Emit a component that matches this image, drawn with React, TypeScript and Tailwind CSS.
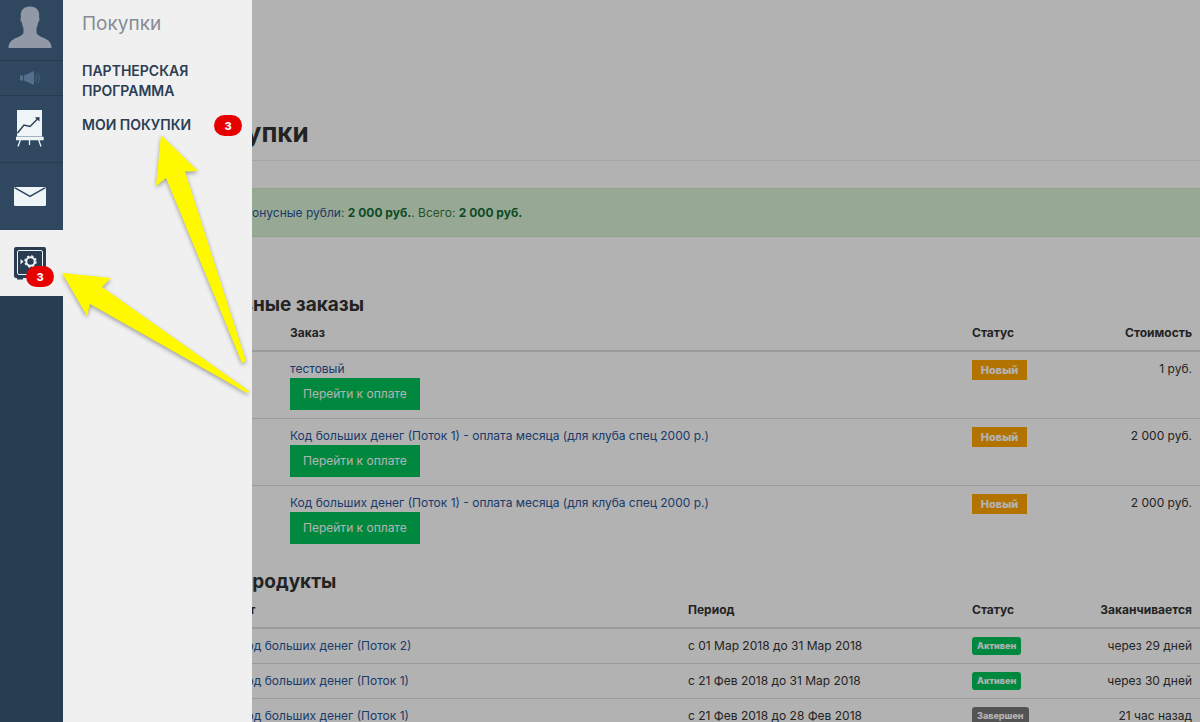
type Order = { title: string; price: string };
type Product = { title: string; period: string; active: boolean; ends: string };

const orders: Order[] = [
	{ title: "тестовый", price: "1 руб." },
	{
		title: "Код больших денег (Поток 1) - оплата месяца (для клуба спец 2000 р.)",
		price: "2 000 руб.",
	},
	{
		title: "Код больших денег (Поток 1) - оплата месяца (для клуба спец 2000 р.)",
		price: "2 000 руб.",
	},
];

const products: Product[] = [
	{
		title: "Код больших денег (Поток 2)",
		period: "с 01 Мар 2018 до 31 Мар 2018",
		active: true,
		ends: "через 29 дней",
	},
	{
		title: "Код больших денег (Поток 1)",
		period: "с 21 Фев 2018 до 31 Мар 2018",
		active: true,
		ends: "через 30 дней",
	},
	{
		title: "Код больших денег (Поток 1)",
		period: "с 21 Фев 2018 до 28 Фев 2018",
		active: false,
		ends: "21 час назад",
	},
];

function CountBadge() {
	return (
		<span className="flex h-[21px] w-7 items-center justify-center rounded-full bg-[#e60000] text-[11px] font-extrabold text-white">
			3
		</span>
	);
}

function UserIcon() {
	return (
		<svg width="44" height="44" viewBox="0 0 44 44" fill="#9099a5">
			<path d="M22 2.500c-6 0-9.200 3.500-9.200 8.500 0 1 .1 1.800.2 2.600-.9.200-.6 4.400 1 5 .3 2.800.8 4.300 1.500 5.700V29c-1 2.400-4 3.400-7.500 5C3.500 36 .5 38.500.5 44h43c0-5.500-3-8-7.500-10-3.500-1.600-6.500-2.600-7.500-5v-4.700c.7-1.400 1.200-2.900 1.500-5.700 1.600-.6 1.900-4.800 1-5 .1-.8.200-1.600.200-2.600 0-5-3.200-8.500-9.200-8.500z" />
		</svg>
	);
}

function MegaphoneIcon() {
	return (
		<svg width="22" height="16" viewBox="0 0 22 16" fill="#54708d">
			<path d="M1 5.500h3v5H1zM5 5.500 15 1v14L5 10.500z" />
			<path d="M16.500 4.500q2 3.500 0 7M18.500 2.500q3.500 5.500 0 11" fill="none" stroke="#486480" />
		</svg>
	);
}

function BoardIcon() {
	return (
		<svg width="28" height="40" viewBox="0 0 28 40">
			<path d="M1 1h25v26.500H1z" fill="#eff5f7" />
			<path d="M0 28.500h27v2H0zM4.500 30.500 2 37.500M13.500 30.500V36M22.500 30.500l2.500 7" fill="#eff5f7" stroke="#eff5f7" strokeWidth="1.300" />
			<path d="M1.500 24 8 16l6 1.500 8-8" fill="none" stroke="#2b4056" strokeWidth="1.500" />
			<path d="M23.500 8v4.500L18.800 8.600z" fill="#2b4056" />
		</svg>
	);
}

function MailIcon() {
	return (
		<svg width="32" height="19" viewBox="0 0 32 19">
			<rect width="32" height="19" rx="1.500" fill="#eff5f7" />
			<path d="m1 .8 15 8.700L31 .8" fill="none" stroke="#2e465f" strokeWidth="1.500" />
		</svg>
	);
}

function SafeIcon() {
	return (
		<svg width="32" height="33" viewBox="0 0 32 33">
			<path d="M3 30h6v2.500H3zM23 30h6v2.500h-6z" fill="#293d52" />
			<rect width="32" height="31" rx="2" fill="#293d52" />
			<rect x="3.500" y="3.500" width="25" height="24" rx="1.500" fill="none" stroke="#eff5f7" />
			<path d="m6.500 12 3 2.500-3 3z" fill="#eff5f7" />
			<circle cx="16.500" cy="14.500" r="4.200" fill="none" stroke="#eff5f7" strokeWidth="2" />
			<circle cx="16.500" cy="14.500" r="5.500" fill="none" stroke="#eff5f7" strokeWidth="1.500" strokeDasharray="2.300 2.020" />
		</svg>
	);
}

function Rail() {
	return (
		<nav className="w-[63px] shrink-0 bg-[#293d50]">
			<a href="#profile" aria-label="Профиль" className="flex h-[61px] items-start justify-center border-b border-[#263b50] bg-[#2f4860] pr-1 pt-1">
				<UserIcon />
			</a>
			<a href="#news" aria-label="Новости" className="flex h-[35px] items-center justify-center border-b border-[#263b50] bg-[#2f4860] pr-1">
				<MegaphoneIcon />
			</a>
			<a href="#stats" aria-label="Статистика" className="flex h-[67px] items-center justify-center border-b border-[#263b50] bg-[#2f4860] pr-1">
				<BoardIcon />
			</a>
			<a href="#mail" aria-label="Сообщения" className="flex h-[67px] items-center justify-center bg-[#2f4860] pr-1">
				<MailIcon />
			</a>
			<a href="#purchases" aria-label="Покупки" className="relative flex h-[66px] items-center justify-center bg-[#f0f0f0] pr-1">
				<SafeIcon />
				<span className="absolute bottom-[9px] right-[9px]">
					<CountBadge />
				</span>
			</a>
		</nav>
	);
}

function Drawer() {
	return (
		<aside className="absolute inset-y-0 left-[63px] w-[189px] bg-[#f0f0f0] pl-[19px] pr-[10px] pt-2">
			<h2 className="text-[19px] leading-8 text-[#868b95]">Покупки</h2>
			<ul className="mt-[21px] flex flex-col gap-3.5 text-sm font-semibold uppercase leading-5 text-[#2b3e54]">
				<li>
					<a href="#partners" className="block w-32">Партнерская программа</a>
				</li>
				<li>
					<a href="#my" className="flex items-start justify-between">
						Мои покупки
						<CountBadge />
					</a>
				</li>
			</ul>
		</aside>
	);
}

function Orders() {
	return (
		<table className="w-full table-fixed text-left">
			<thead>
				<tr className="border-b-2 border-[#ddd]">
					<th className="w-[87px] px-2 pb-2">№</th>
					<th className="px-2 pb-2">Заказ</th>
					<th className="w-[110px] px-2 pb-2">Статус</th>
					<th className="w-[126px] px-2 pb-2 text-right">Стоимость</th>
				</tr>
			</thead>
			<tbody>
				{orders.map((order, i) => (
					<tr key={i} className="border-b border-[#ddd] align-top last:border-0">
						<td className="p-2">{i + 1}</td>
						<td className="p-2">
							<a href="#order" className="block text-[#2a5599]">{order.title}</a>
							<button className="block h-8 bg-[#00c55a] px-[13px] text-white">Перейти к оплате</button>
						</td>
						<td className="p-2">
							<span className="flex h-5 w-[55px] items-center justify-center bg-[#ffa500] text-[11px] font-extrabold text-white">
								Новый
							</span>
						</td>
						<td className="p-2 text-right">{order.price}</td>
					</tr>
				))}
			</tbody>
		</table>
	);
}

function Products() {
	return (
		<table className="w-full table-fixed text-left">
			<thead>
				<tr className="border-b-2 border-[#ddd]">
					<th className="px-2 pb-2">Продукт</th>
					<th className="w-[284px] px-2 pb-2">Период</th>
					<th className="w-[110px] px-2 pb-2">Статус</th>
					<th className="w-[126px] px-2 pb-2 text-right">Заканчивается</th>
				</tr>
			</thead>
			<tbody>
				{products.map((product, i) => (
					<tr key={i} className="border-b border-[#ddd] align-top">
						<td className="p-2">
							<a href="#product" className="block pl-9 text-[#2a5599]">{product.title}</a>
						</td>
						<td className="p-2">{product.period}</td>
						<td className="p-2">
							<span
								className={`flex h-[18px] w-fit items-center rounded-[3px] px-[5px] text-[9px] font-extrabold text-white ${
									product.active ? "bg-[#00c55a]" : "bg-[#777]"
								}`}
							>
								{product.active ? "Активен" : "Завершен"}
							</span>
						</td>
						<td className="p-2 text-right">{product.ends}</td>
					</tr>
				))}
			</tbody>
		</table>
	);
}

function Arrows() {
	return (
		<svg width="252" height="420" viewBox="0 0 252 420" className="pointer-events-none absolute left-0 top-0 drop-shadow-[0_2px_2px_rgba(0,0,0,0.35)]" fill="#fff900">
			<path d="M161 135 198 171 185 171.500 246 361 242 363 166 178 156 186z" />
			<path d="M62 273 111 278 102 287 249 391 247 393 90 304 87 316z" />
		</svg>
	);
}

export default function App() {
	return (
		<div className="relative flex h-screen overflow-hidden bg-white font-['Inter',sans-serif] text-xs leading-[18px] text-[#333]">
			<Rail />
			<main className="relative min-w-0 flex-1 pl-[132px] pt-[117px]">
				<h1 className="border-b border-[#eee] pb-[11px] text-[26px] font-bold leading-8">Покупки</h1>
				<div className="mt-[27px] border-y border-[#d0e9c6] bg-[#d8f3d4] px-[15px] py-3.5 leading-[19px] text-[#3c763d]">
					<a href="#bonus" className="text-[#2a5599]">Ваши бонусные рубли</a>: <b className="text-[#146c36]">2 000 руб.</b>. Всего:{" "}
					<b className="text-[#146c36]">2 000 руб.</b>
				</div>
				<h2 className="mb-[7px] mt-14 text-[19px] font-bold leading-6">Активные заказы</h2>
				<Orders />
				<h2 className="mb-[7px] mt-[18px] text-[19px] font-bold leading-6">Мои продукты</h2>
				<Products />
				<div className="absolute inset-0 bg-black/30" />
			</main>
			<Drawer />
			<Arrows />
		</div>
	);
}
